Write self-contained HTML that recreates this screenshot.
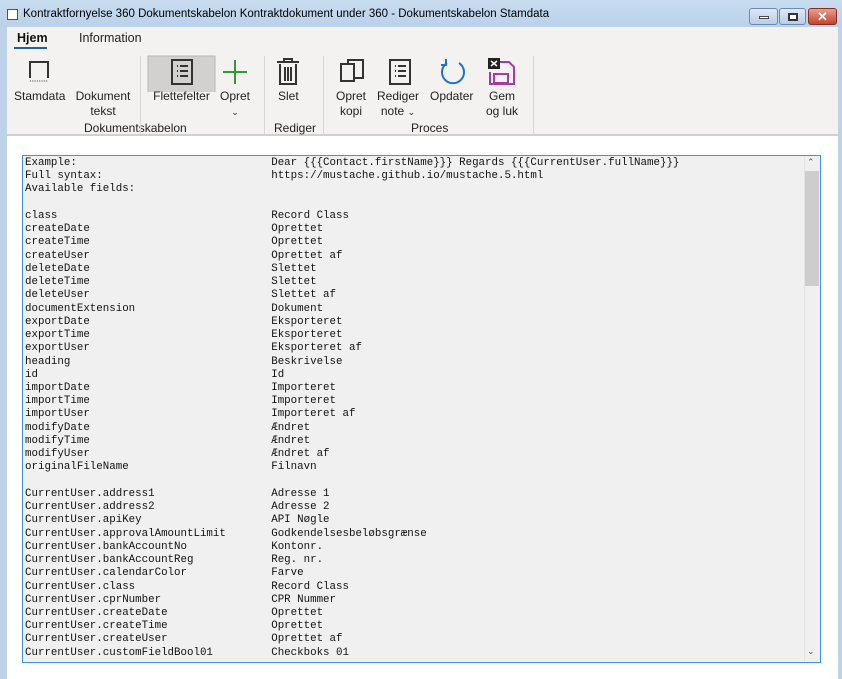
<!DOCTYPE html>
<html><head><meta charset="utf-8"><style>
*{margin:0;padding:0;box-sizing:border-box}
body{width:842px;height:679px;overflow:hidden;background:#bcd3ea;font-family:"Liberation Sans",sans-serif;position:relative}
.a{position:absolute}
.title{left:0;top:0;width:842px;height:27px;background:linear-gradient(#c9dcf0,#b9d1ea)}
.ttxt{left:23px;top:8px;font-size:11.5px;color:#000}
.chk{left:7px;top:9px;width:11px;height:11px;border:1px solid #555;background:#fff}
.btn{top:8px;height:17px;border:1px solid #6c8bb0;border-radius:3px;background:linear-gradient(#dfe9f5,#b9cde4)}
.main{left:7px;top:27px;width:831px;height:652px;background:#fff}
.rib{left:7px;top:27px;width:831px;height:109px;background:#f3f2f1;border-bottom:2px solid #d2d0ce}
.lbl{font-size:12px;color:#222;text-align:center;line-height:15px}
.sep{width:1px;background:#d8d6d4;top:56px;height:78px}
.box{left:22px;top:155px;width:799px;height:508px;border:1px solid #3a96dd;background:#f0f0f0}
pre{position:absolute;left:25px;top:157px;font-family:"Liberation Mono",monospace;font-size:10.8px;line-height:13.24px;color:#111}
</style></head><body>
<div class="a title"></div>
<div class="a chk"></div>
<div class="a ttxt">Kontraktfornyelse 360 Dokumentskabelon Kontraktdokument under 360 - Dokumentskabelon Stamdata</div>
<div class="a btn" style="left:749px;width:29px"><div class="a" style="left:9px;top:7px;width:10px;height:3px;background:#fff;border:1px solid #445"></div></div>
<div class="a btn" style="left:779px;width:27px"><div class="a" style="left:8px;top:4px;width:10px;height:8px;border:2px solid #334;background:#fff"></div></div>
<div class="a btn" style="left:808px;width:29px;border-color:#8b2b1e;background:linear-gradient(#e7a093,#c5422c);color:#fff;font-weight:bold;font-size:13px;text-align:center;line-height:15px">✕</div>
<div class="a main"></div>
<div class="a rib"></div>
<div class="a" style="left:17px;top:31px;font-size:12.5px;font-weight:bold;color:#111">Hjem</div>
<div class="a" style="left:14px;top:47px;width:33px;height:2px;background:#1c5fa8"></div>
<div class="a" style="left:79px;top:31px;font-size:12.5px;color:#222">Information</div>
<!-- icons -->
<svg class="a" style="left:0;top:50px" width="560" height="42">
<path d="M30 28V12h18v16" stroke="#333" stroke-width="2" fill="none"/><path d="M30 31h18" stroke="#333" stroke-dasharray="1 1.3"/>
<rect x="148" y="6" width="67" height="64" fill="#d2d1d0" stroke="#b8b7b6"/>
<rect x="172" y="10" width="20" height="24" fill="none" stroke="#333" stroke-width="2"/><path d="M177 16h1M177 21h1M177 26h1M180 16h8M180 21h8M180 26h8" stroke="#333" stroke-width="2"/>
<path d="M235 10v24M223 22h24" stroke="#2e9a3a" stroke-width="2"/>
<path d="M277 12h22M284 12v-3h8v3M280 14v20h16v-20M285 17v14M288 17v14M291 17v14" stroke="#333" stroke-width="2" fill="none"/>
<rect x="341" y="14" width="13" height="17" fill="none" stroke="#333" stroke-width="2"/><path d="M348 14v-4h15v18h-9" stroke="#333" stroke-width="2" fill="none"/>
<rect x="390" y="10" width="20" height="24" fill="none" stroke="#333" stroke-width="2"/><path d="M395 16h1M395 21h1M395 26h1M398 16h8M398 21h8M398 26h8" stroke="#333" stroke-width="2"/>
<path d="M447 13A11 11 0 1 0 459 13" stroke="#1f74c8" stroke-width="2" fill="none"/><path d="M446 9v6h-5" stroke="#1f74c8" stroke-width="2" fill="none"/>
<path d="M498 12h11l5 5v17h-24v-12" stroke="#a53aa8" stroke-width="2" fill="none"/><rect x="494" y="24" width="14" height="9" fill="none" stroke="#a53aa8" stroke-width="2"/>
<rect x="488" y="8" width="12" height="11" fill="#222"/><path d="M491 11l6 5M497 11l-6 5" stroke="#fff" stroke-width="1.5"/>
</svg>
<div class="a lbl" style="left:14px;top:89px">Stamdata</div>
<div class="a lbl" style="left:72px;top:89px;width:62px">Dokument<br>tekst</div>
<div class="a lbl" style="left:84px;top:121px">Dokumentskabelon</div>
<div class="a sep" style="left:140px"></div>
<div class="a lbl" style="left:148px;top:89px;width:67px">Flettefelter</div>
<div class="a lbl" style="left:220px;top:89px">Opret<br><span style="font-size:9px">⌄</span></div>
<div class="a sep" style="left:264px"></div>
<div class="a lbl" style="left:278px;top:89px">Slet</div>
<div class="a lbl" style="left:274px;top:121px">Rediger</div>
<div class="a sep" style="left:323px"></div>
<div class="a lbl" style="left:333px;top:89px;width:36px">Opret<br>kopi</div>
<div class="a lbl" style="left:375px;top:89px;width:46px">Rediger<br>note <span style="font-size:9px">⌄</span></div>
<div class="a lbl" style="left:430px;top:89px">Opdater</div>
<div class="a lbl" style="left:485px;top:89px;width:34px">Gem<br>og luk</div>
<div class="a lbl" style="left:411px;top:121px">Proces</div>
<div class="a sep" style="left:533px"></div>
<div class="a box"></div>
<div class="a" style="left:804px;top:156px;width:16px;height:506px;background:#f0f0f0;border-left:1px solid #e4e4e4"></div>
<div class="a" style="left:805px;top:171px;width:14px;height:115px;background:#cdcdcd"></div>
<div class="a" style="left:807px;top:157px;font-size:9px;color:#555">⌃</div>
<div class="a" style="left:807px;top:646px;font-size:9px;color:#555">⌄</div>
<pre>Example:                              Dear {{{Contact.firstName}}} Regards {{{CurrentUser.fullName}}}
Full syntax:                          https://mustache.github.io/mustache.5.html
Available fields:

class                                 Record Class
createDate                            Oprettet
createTime                            Oprettet
createUser                            Oprettet af
deleteDate                            Slettet
deleteTime                            Slettet
deleteUser                            Slettet af
documentExtension                     Dokument
exportDate                            Eksporteret
exportTime                            Eksporteret
exportUser                            Eksporteret af
heading                               Beskrivelse
id                                    Id
importDate                            Importeret
importTime                            Importeret
importUser                            Importeret af
modifyDate                            Ændret
modifyTime                            Ændret
modifyUser                            Ændret af
originalFileName                      Filnavn

CurrentUser.address1                  Adresse 1
CurrentUser.address2                  Adresse 2
CurrentUser.apiKey                    API Nøgle
CurrentUser.approvalAmountLimit       Godkendelsesbeløbsgrænse
CurrentUser.bankAccountNo             Kontonr.
CurrentUser.bankAccountReg            Reg. nr.
CurrentUser.calendarColor             Farve
CurrentUser.class                     Record Class
CurrentUser.cprNumber                 CPR Nummer
CurrentUser.createDate                Oprettet
CurrentUser.createTime                Oprettet
CurrentUser.createUser                Oprettet af
CurrentUser.customFieldBool01         Checkboks 01</pre>
</body></html>
